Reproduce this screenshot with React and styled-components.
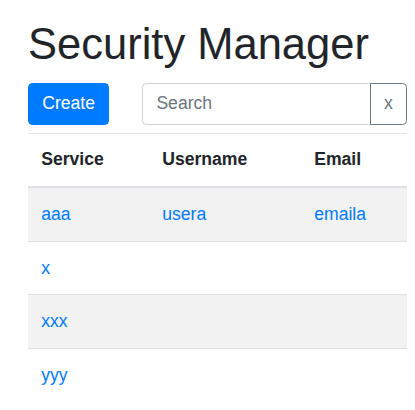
import React, {useState} from 'react';
import styled, {createGlobalStyle} from 'styled-components';

const GlobalStyle = createGlobalStyle`
  body {
    margin: 0;
    background: #fff;
    font-family: "Liberation Sans", Arial, sans-serif;
    font-size: 17.6px;
    color: #212529;
  }
`;

const Page = styled.div`
  padding: 18px 8px 0 28px;
`;

const Title = styled.h1`
  margin: 0 0 12px;
  font-size: 43.5px;
  font-weight: 400;
  line-height: 53px;
  color: #212529;
`;

const Toolbar = styled.div`
  display: flex;
  align-items: stretch;
  height: 42px;
  margin-bottom: 8px;
`;

const Button = styled.button`
  font-family: inherit;
  font-size: 17.6px;
  line-height: 26.4px;
  padding: 0 13.2px 2px;
  border: 1px solid ${props => props.border};
  background: ${props => props.background};
  color: ${props => props.color};
  border-radius: ${props => props.radius};
  cursor: pointer;
`;

const SearchGroup = styled.div`
  display: flex;
  flex: 1;
  min-width: 0;
  margin-left: 33px;
`;

const SearchInput = styled.input`
  flex: 1;
  width: 100%;
  min-width: 0;
  box-sizing: border-box;
  font-family: inherit;
  font-size: 17.6px;
  padding: 0 13.2px 2px;
  border: 1px solid #ced4da;
  border-radius: 4.4px 0 0 4.4px;
  color: #495057;
  outline: none;

  &::placeholder {
    color: #6c757d;
  }
`;

const Table = styled.table`
  width: 100%;
  table-layout: fixed;
  border-collapse: separate;
  border-spacing: 0;
`;

const Th = styled.th`
  box-sizing: border-box;
  text-align: left;
  font-weight: 700;
  line-height: 26.4px;
  padding: 12px 13.2px 14px;
  border-top: 1px solid #dee2e6;
  border-bottom: 2px solid #dee2e6;
  width: ${props => props.width || 'auto'};
`;

const Row = styled.tr`
  background: ${props => props.striped ? '#f2f2f2' : 'transparent'};

  & td {
    border-top: ${props => props.first ? 'none' : '1px solid #dee2e6'};
  }
`;

const Td = styled.td`
  line-height: 26.4px;
  padding: 13px 13.2px;
`;

const Link = styled.a`
  color: #007bff;
  text-decoration: none;
  cursor: pointer;
`;

const rows = [
    {service: 'aaa', username: 'usera', email: 'emaila'},
    {service: 'x', username: '', email: ''},
    {service: 'xxx', username: '', email: ''},
    {service: 'yyy', username: '', email: ''},
];

const App = () => {
    const [query, setQuery] = useState('');

    return (
        <Page>
            <GlobalStyle/>
            <Title>Security Manager</Title>
            <Toolbar>
                <Button background={'#007bff'} border={'#007bff'} color={'#fff'} radius={'4.4px'}>Create</Button>
                <SearchGroup>
                    <SearchInput
                        placeholder={'Search'}
                        value={query}
                        onChange={e => setQuery(e.target.value)}
                    />
                    <Button
                        background={'#fff'}
                        border={'#6c757d'}
                        color={'#6c757d'}
                        radius={'0 4.4px 4.4px 0'}
                        style={{marginLeft: -1}}
                        onClick={() => setQuery('')}
                    >x</Button>
                </SearchGroup>
            </Toolbar>
            <Table>
                <thead>
                <tr>
                    <Th width={'121px'}>Service</Th>
                    <Th width={'152px'}>Username</Th>
                    <Th>Email</Th>
                </tr>
                </thead>
                <tbody>
                {rows.map((row, i) => (
                    <Row key={i} striped={i % 2 === 0} first={i === 0}>
                        <Td><Link>{row.service}</Link></Td>
                        <Td><Link>{row.username}</Link></Td>
                        <Td><Link>{row.email}</Link></Td>
                    </Row>
                ))}
                </tbody>
            </Table>
        </Page>
    );
};

export default App;
